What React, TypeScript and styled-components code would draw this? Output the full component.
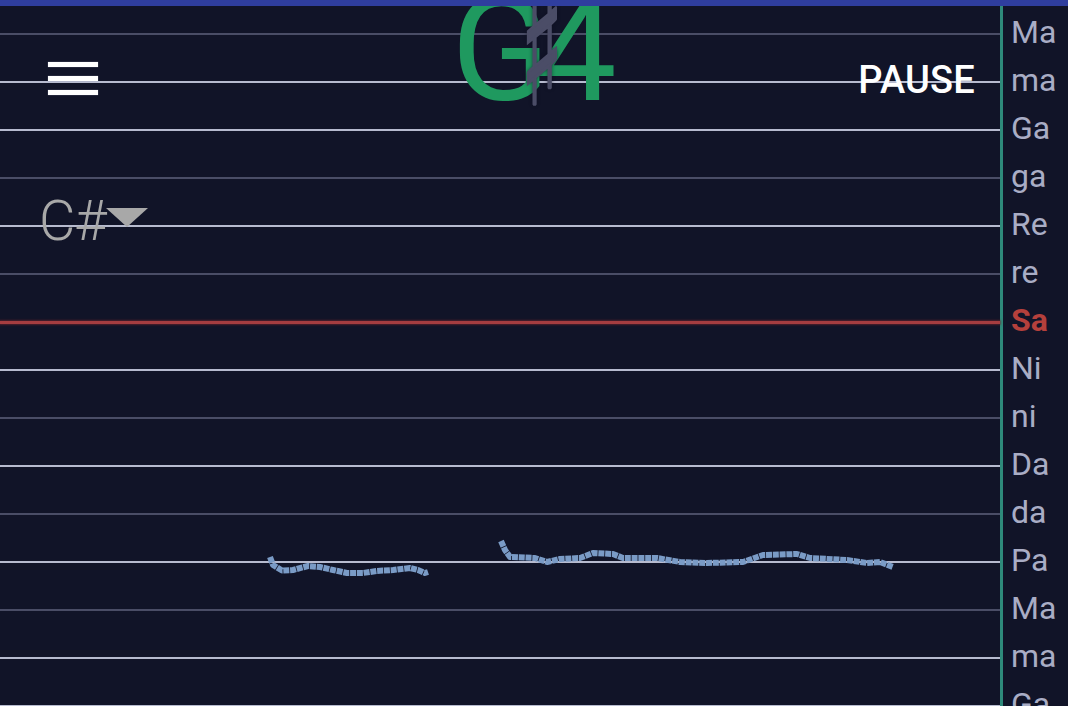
import styled, { createGlobalStyle } from 'styled-components';

// ===== DATA =====

type Tone = 'bright' | 'dim' | 'tonic';

const SWARAS: { name: string; tone: Tone }[] = [
  { name: 'Ma', tone: 'dim' },
  { name: 'ma', tone: 'bright' },
  { name: 'Ga', tone: 'bright' },
  { name: 'ga', tone: 'dim' },
  { name: 'Re', tone: 'bright' },
  { name: 're', tone: 'dim' },
  { name: 'Sa', tone: 'tonic' },
  { name: 'Ni', tone: 'bright' },
  { name: 'ni', tone: 'dim' },
  { name: 'Da', tone: 'bright' },
  { name: 'da', tone: 'dim' },
  { name: 'Pa', tone: 'bright' },
  { name: 'Ma', tone: 'dim' },
  { name: 'ma', tone: 'bright' },
  { name: 'Ga', tone: 'bright' },
];

const TRACE_A = [
  [270, 557], [273, 565], [282, 570.5], [293, 570], [308, 566], [320, 567],
  [333, 570], [347, 573], [363, 573], [377, 571], [393, 570], [410, 568],
  [418, 570], [425, 573], [428, 572],
];

const TRACE_B = [
  [501, 541], [505, 550], [510, 557], [535, 558], [547, 562], [560, 559],
  [580, 558], [593, 553], [613, 554], [623, 558], [657, 558], [680, 562],
  [707, 563], [743, 562], [763, 555], [797, 554], [810, 558], [847, 560],
  [867, 563], [880, 562], [893, 567],
];

const toPoints = (pts: number[][]) => pts.map(p => p.join(',')).join(' ');

// ===== STYLES =====

const GlobalStyle = createGlobalStyle`
  html, body {
    margin: 0;
    padding: 0;
    background: #111428;
  }
  body {
    font-family: Roboto, "Liberation Sans", sans-serif;
  }
`;

const Screen = styled.div`
  position: relative;
  width: 1068px;
  height: 706px;
  overflow: hidden;
  background: #111428;
  display: flex;
  flex-direction: column;
`;

const TopBar = styled.div`
  height: 6px;
  flex-shrink: 0;
  background: #2f3e9e;
  position: relative;
  z-index: 3;
`;

const Body = styled.div`
  flex: 1;
  display: flex;
  min-height: 0;
`;

const Staff = styled.div`
  position: relative;
  width: 1000px;
  flex-shrink: 0;
  padding-top: 4px;
  display: flex;
  flex-direction: column;
`;

const StaffRow = styled.div`
  height: 48px;
  flex-shrink: 0;
  display: flex;
  align-items: center;
`;

const Line = styled.div<{ $tone: Tone }>`
  width: 100%;
  height: ${p => (p.$tone === 'tonic' ? '3px' : '2px')};
  background: ${p =>
    p.$tone === 'tonic' ? '#a53d40' : p.$tone === 'bright' ? '#b7bbcf' : '#4a4d66'};
  box-shadow: ${p => (p.$tone === 'tonic' ? '0 0 2px 1px rgba(120, 40, 45, 0.6)' : 'none')};
`;

const Divider = styled.div`
  width: 3px;
  flex-shrink: 0;
  background: #2e8a7b;
`;

const Labels = styled.div`
  flex: 1;
  padding: 2px 0 0 8px;
  display: flex;
  flex-direction: column;
`;

const Label = styled.div<{ $tone: Tone }>`
  height: 48px;
  flex-shrink: 0;
  line-height: 48px;
  font-size: 32px;
  font-weight: ${p => (p.$tone === 'tonic' ? 700 : 400)};
  color: ${p => (p.$tone === 'tonic' ? '#b5403c' : '#a9adc5')};
  white-space: nowrap;
`;

// Overlays sitting on top of the staff
const Header = styled.div`
  position: absolute;
  top: 0;
  left: 0;
  right: 0;
  height: 130px;
  display: grid;
  grid-template-columns: 1fr auto 1fr;
  align-items: start;
  z-index: 2;
`;

const MenuButton = styled.div`
  justify-self: start;
  margin: 62px 0 0 48px;
  width: 50px;
  display: flex;
  flex-direction: column;
  gap: 9px;
`;

const MenuBar = styled.div`
  height: 5px;
  background: #ffffff;
  box-shadow: 0 0 1px rgba(140, 145, 170, 0.9);
`;

const NoteTitle = styled.div`
  margin-top: -22px;
  display: flex;
  align-items: baseline;
  font-size: 145px;
  line-height: 145px;
  font-weight: 400;
  color: #1f995f;
  position: relative;
`;

// zero-width slot: the sharp sign is laid over the G and the 4
const SharpSlot = styled.span`
  position: relative;
  width: 0;
  margin-right: -15px;
  align-self: stretch;
  z-index: 1;
`;

const Sharp = styled.span`
  position: absolute;
  left: 0;
  top: 34px;
  font-family: "DejaVu Sans", sans-serif;
  font-size: 104px;
  line-height: 104px;
  color: #4b4d67;
  -webkit-text-stroke: 2.2px #4b4d67;
  transform-origin: 50% 88px;
  transform: translate(calc(-50% - 8px), 4px) scale(0.86, 1.52);
  text-shadow: 0 0 4px rgba(12, 12, 30, 0.95);
`;

const PauseButton = styled.div`
  justify-self: end;
  margin: 58px 93px 0 0;
  font-size: 38px;
  line-height: 44px;
  font-weight: 500;
  color: #ffffff;
  letter-spacing: 0.2px;
`;

const KeySelect = styled.div`
  position: absolute;
  left: 39px;
  top: 183px;
  display: flex;
  align-items: flex-start;
  color: #a8a8a8;
  z-index: 2;
`;

const KeyText = styled.span`
  font-size: 56px;
  line-height: 64px;
  font-weight: 300;
  letter-spacing: -1px;
`;

const Caret = styled.span`
  margin: 19px 0 0 0;
  width: 0;
  height: 0;
  border-left: 21px solid transparent;
  border-right: 21px solid transparent;
  border-top: 19px solid #a8a8a8;
`;

const Trace = styled.svg`
  position: absolute;
  left: 0;
  top: -6px;
  width: 1000px;
  height: 706px;
  pointer-events: none;
  z-index: 1;
`;

// ===== COMPONENT =====

export default function App() {
  return (
    <Screen>
      <GlobalStyle />
      <TopBar />
      <Body>
        <Staff>
          {SWARAS.map((s, i) => (
            <StaffRow key={i}>
              <Line $tone={s.tone} />
            </StaffRow>
          ))}
          <Trace viewBox="0 0 1000 706">
            {[TRACE_A, TRACE_B].map((pts, i) => (
              <polyline
                key={i}
                points={toPoints(pts)}
                fill="none"
                stroke="#7a9bc6"
                strokeWidth={6}
                strokeLinejoin="round"
                strokeDasharray="6 0.8"
              />
            ))}
          </Trace>
          <KeySelect>
            <KeyText>C#</KeyText>
            <Caret />
          </KeySelect>
        </Staff>
        <Divider />
        <Labels>
          {SWARAS.map((s, i) => (
            <Label key={i} $tone={s.tone}>{s.name}</Label>
          ))}
        </Labels>
      </Body>
      <Header>
        <MenuButton>
          <MenuBar />
          <MenuBar />
          <MenuBar />
        </MenuButton>
        <NoteTitle>
          G
          <SharpSlot>
            <Sharp>♯</Sharp>
          </SharpSlot>
          4
        </NoteTitle>
        <PauseButton>PAUSE</PauseButton>
      </Header>
    </Screen>
  );
}
